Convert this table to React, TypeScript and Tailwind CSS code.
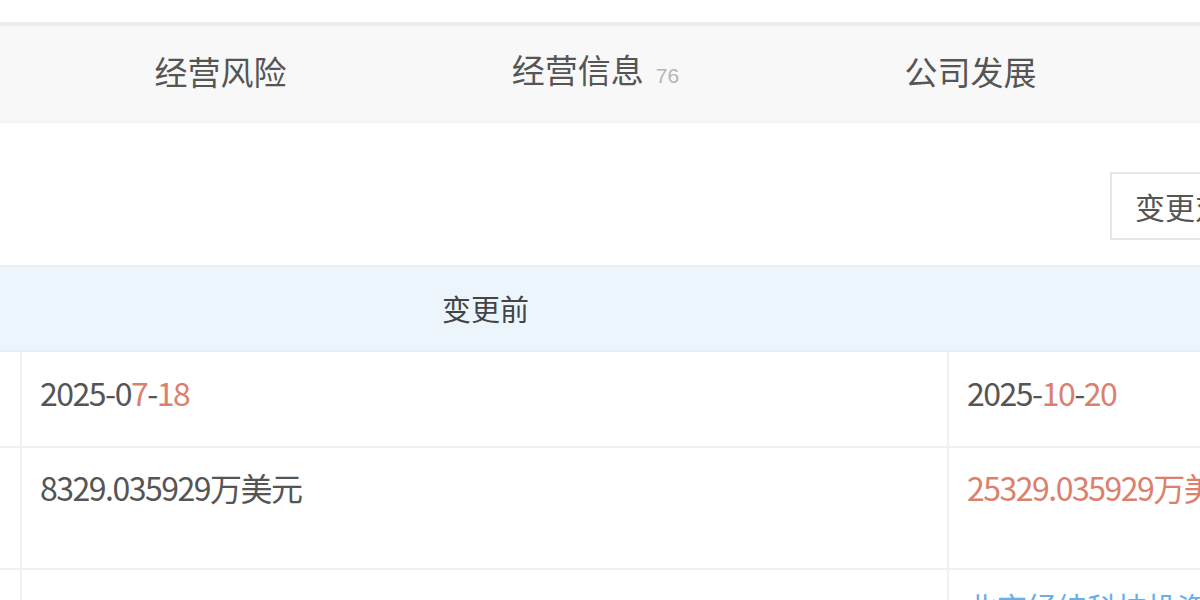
import React from 'react';

const FONT = "font-['Liberation_Sans_Narrow','Arial_Narrow','Noto_Sans_CJK_SC',sans-serif]";

const TABS = [
  { label: '经营风险' },
  { label: '经营信息', count: '76' },
  { label: '公司发展' },
];

const Red: React.FC<{ children: React.ReactNode }> = ({ children }) => (
  <span className="text-[#dc806e]">{children}</span>
);

const App: React.FC = () => {
  return (
    <div className={`w-[1200px] h-[600px] overflow-hidden bg-white text-[#555] ${FONT}`}>
      <div className="h-[22px]" />

      {/* tab bar */}
      <div className="h-[4px] bg-[#ececec]" />
      <div className="h-[97px] bg-[#f8f8f8] border-b-2 border-[#f3f3f3] flex items-center pl-[33px] pb-[6px]">
        {TABS.map((t) => (
          <div key={t.label} className="w-[375px] shrink-0 flex items-baseline justify-center">
            <span className="text-[33px] leading-[40px] text-[#555]">{t.label}</span>
            {t.count && (
              <span className="ml-[12px] text-[21px] text-[#b5b5b5] font-['Liberation_Sans',sans-serif]">{t.count}</span>
            )}
          </div>
        ))}
      </div>

      {/* toolbar */}
      <div className="h-[142px] flex items-start justify-end pt-[49px]">
        <button className="w-[170px] h-[68px] mr-[-80px] border-2 border-[#e6e6e6] bg-white text-[30px] text-[#555] text-left pl-[23px] whitespace-nowrap">
          变更对比
        </button>
      </div>

      {/* compare table */}
      <div className="grid grid-cols-[22px_927px_927px] w-[1876px]">
        <div className="h-[87px] col-span-3 bg-[#edf5fc] border-t-2 border-b-2 border-[#e7eef5] grid grid-cols-[22px_927px_927px] items-center">
          <div />
          <div className="text-center text-[29px] text-[#444]">变更前</div>
          <div className="text-center text-[29px] text-[#444]">变更后</div>
        </div>

        <div className="h-[96px] border-r-2 border-b-2 border-[#eef0f2]" />
        <div className="h-[96px] border-r-2 border-b-2 border-[#eef0f2] pl-[18px] pt-[20px] text-[32px] leading-[40px] tracking-[-1.5px]">
          2025-0<Red>7</Red>-<Red>18</Red>
        </div>
        <div className="h-[96px] border-b-2 border-[#eef0f2] pl-[18px] pt-[20px] text-[32px] leading-[40px] tracking-[-1.5px]">
          2025-<Red>10</Red>-<Red>20</Red>
        </div>

        <div className="h-[122px] border-r-2 border-b-2 border-[#eef0f2]" />
        <div className="h-[122px] border-r-2 border-b-2 border-[#eef0f2] pl-[18px] pt-[19px] text-[32px] leading-[40px] tracking-[-1.5px]">
          8329.035929万美元
        </div>
        <div className="h-[122px] border-b-2 border-[#eef0f2] pl-[18px] pt-[19px] text-[32px] leading-[40px] tracking-[-1.5px]">
          <Red>25329.035929万美元</Red>
        </div>

        <div className="h-[80px] border-r-2 border-[#eef0f2]" />
        <div className="h-[80px] border-r-2 border-[#eef0f2]" />
        <div className="h-[80px] pl-[18px] pt-[16px] text-[30px] leading-[40px] text-[#6aaee6]">
          北京经纬科技投资管理有限公司
        </div>
      </div>
    </div>
  );
};

export default App;
